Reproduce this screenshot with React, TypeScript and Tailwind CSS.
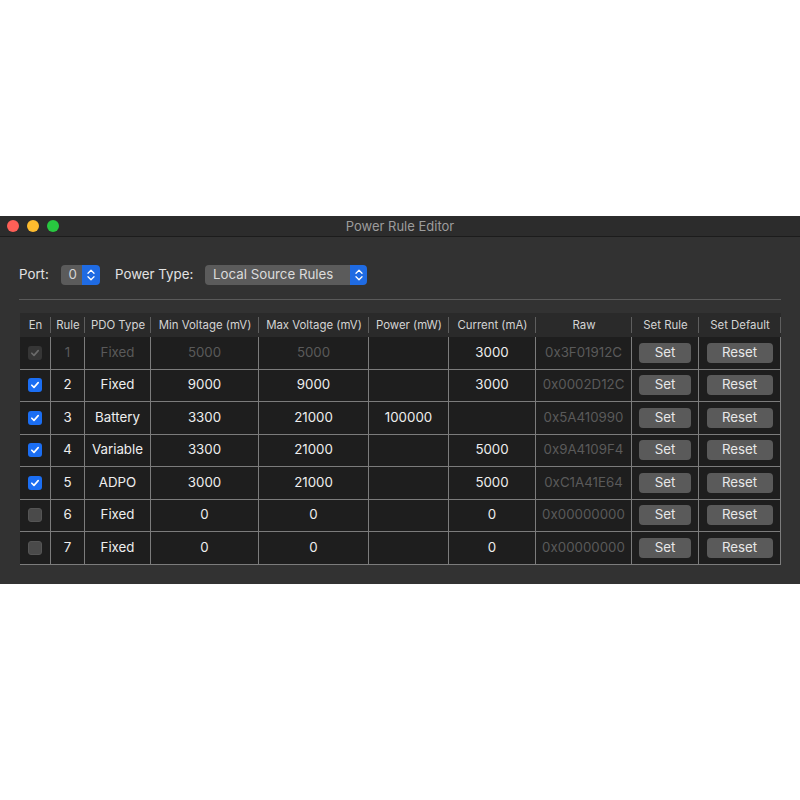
import React from "react";

type Row = {
  en: "on" | "off" | "dim";
  rule: number;
  type: string;
  min: string;
  max: string;
  power: string;
  current: string;
  raw: string;
};

const rows: Row[] = [
  { en: "dim", rule: 1, type: "Fixed", min: "5000", max: "5000", power: "", current: "3000", raw: "0x3F01912C" },
  { en: "on", rule: 2, type: "Fixed", min: "9000", max: "9000", power: "", current: "3000", raw: "0x0002D12C" },
  { en: "on", rule: 3, type: "Battery", min: "3300", max: "21000", power: "100000", current: "", raw: "0x5A410990" },
  { en: "on", rule: 4, type: "Variable", min: "3300", max: "21000", power: "", current: "5000", raw: "0x9A4109F4" },
  { en: "on", rule: 5, type: "ADPO", min: "3000", max: "21000", power: "", current: "5000", raw: "0xC1A41E64" },
  { en: "off", rule: 6, type: "Fixed", min: "0", max: "0", power: "", current: "0", raw: "0x00000000" },
  { en: "off", rule: 7, type: "Fixed", min: "0", max: "0", power: "", current: "0", raw: "0x00000000" },
];

const headers = [
  "En",
  "Rule",
  "PDO Type",
  "Min Voltage (mV)",
  "Max Voltage (mV)",
  "Power (mW)",
  "Current (mA)",
  "Raw",
  "Set Rule",
  "Set Default",
];

const cols = "grid grid-cols-[31px_34px_66px_108px_110px_80px_87px_96px_67px_82px]";

function UpDown() {
  return (
    <svg width="8" height="12" viewBox="0 0 8 12" fill="none" stroke="white" strokeWidth="1.3" strokeLinecap="round" strokeLinejoin="round">
      <path d="M1 4.2 L4 1.3 L7 4.2" />
      <path d="M1 7.8 L4 10.7 L7 7.8" />
    </svg>
  );
}

function Check({ color }: { color: string }) {
  return (
    <svg width="10" height="10" viewBox="0 0 10 10" fill="none" stroke={color} strokeWidth="1.6" strokeLinecap="round" strokeLinejoin="round">
      <path d="M1.8 5.2 L4 7.4 L8.2 2.6" />
    </svg>
  );
}

function Box({ state }: { state: Row["en"] }) {
  if (state === "on")
    return (
      <div className="flex h-[14px] w-[14px] items-center justify-center rounded-[3px] bg-[#1b6ef3]">
        <Check color="white" />
      </div>
    );
  if (state === "dim")
    return (
      <div className="flex h-[14px] w-[14px] items-center justify-center rounded-[3px] bg-[#363636]">
        <Check color="#6b6b6b" />
      </div>
    );
  return <div className="h-[14px] w-[14px] rounded-[3px] border border-[#555] bg-[#4a4a4a]" />;
}

function Cell({ children, className = "" }: { children?: React.ReactNode; className?: string }) {
  return (
    <div className={`flex h-[32.5px] items-center justify-center border-b border-r border-[#7c7c7c] ${className}`}>
      {children}
    </div>
  );
}

export default function App() {
  return (
    <div
      className="flex h-[800px] w-[800px] flex-col bg-white"
      style={{ fontFamily: "Inter, 'Noto Sans', sans-serif" }}
    >
      <div className="h-[216px]" />
      <div className="flex h-[368px] flex-col bg-[#323232]">
        {/* title bar */}
        <div className="relative flex h-[21px] items-center border-b border-[#1c1c1c] bg-[#2c2c2c]">
          <div className="flex gap-[8px] pl-[7px]">
            <span className="h-[12px] w-[12px] rounded-full bg-[#fe5f57]" />
            <span className="h-[12px] w-[12px] rounded-full bg-[#febc2e]" />
            <span className="h-[12px] w-[12px] rounded-full bg-[#28c840]" />
          </div>
          <div className="absolute inset-0 flex items-center justify-center pt-px text-[13px] text-[#9d9d9d]">
            Power Rule Editor
          </div>
        </div>

        <div className="px-[19px]">
          {/* controls */}
          <div className="mt-[28px] flex h-[20px] items-center text-[13.3px] text-[#e2e2e2]">
            <span className="w-[42px]">Port:</span>
            <div className="flex h-[20px] w-[39px] overflow-hidden rounded-[4px]">
              <div className="flex flex-1 items-center justify-end bg-[#5b5b5b] pr-[5px] text-[#d6d6d6]">0</div>
              <div className="flex w-[18px] items-center justify-center bg-[#1f6be3]">
                <UpDown />
              </div>
            </div>
            <span className="ml-[15px] w-[90px]">Power Type:</span>
            <div className="flex h-[20px] w-[162px] overflow-hidden rounded-[4px]">
              <div className="flex flex-1 items-center bg-[#5b5b5b] pl-[8px] text-[#dcdcdc]">Local Source Rules</div>
              <div className="flex w-[17px] items-center justify-center bg-[#1f6be3]">
                <UpDown />
              </div>
            </div>
          </div>

          <div className="mt-[14px] h-px bg-[#5a5a5a]" />

          {/* table */}
          <div className="ml-px mt-[13px] w-[761px] bg-[#1e1e1e]">
            <div className={`${cols} h-[24px] bg-[#2a2a2a] text-[11.4px] text-[#d4d4d4]`}>
              {headers.map((h) => (
                <div key={h} className="relative flex items-center justify-center pt-[2px]">
                  {h}
                  <span className="absolute right-0 top-[4px] h-[16px] w-px bg-[#5e5e5e]" />
                </div>
              ))}
            </div>
            {rows.map((r) => {
              const dim = r.en === "dim";
              const tx = dim ? "text-[#5a5a5a]" : "text-[#eeeeee]";
              return (
                <div key={r.rule} className={`${cols} text-[13.3px]`}>
                  <Cell>
                    <Box state={r.en} />
                  </Cell>
                  <Cell className={tx}>{r.rule}</Cell>
                  <Cell className={tx}>{r.type}</Cell>
                  <Cell className={tx}>{r.min}</Cell>
                  <Cell className={tx}>{r.max}</Cell>
                  <Cell className="text-[#eeeeee]">{r.power}</Cell>
                  <Cell className="text-[#eeeeee]">{r.current}</Cell>
                  <Cell className="text-[#5a5a5a]">{r.raw}</Cell>
                  <Cell>
                    <button className="h-[20px] w-[52px] rounded-[4px] bg-[#5a5a5a] text-[13.3px] text-[#e8e8e8]">Set</button>
                  </Cell>
                  <Cell>
                    <button className="h-[20px] w-[66px] rounded-[4px] bg-[#5a5a5a] text-[13.3px] text-[#e8e8e8]">Reset</button>
                  </Cell>
                </div>
              );
            })}
          </div>
        </div>
      </div>
    </div>
  );
}
